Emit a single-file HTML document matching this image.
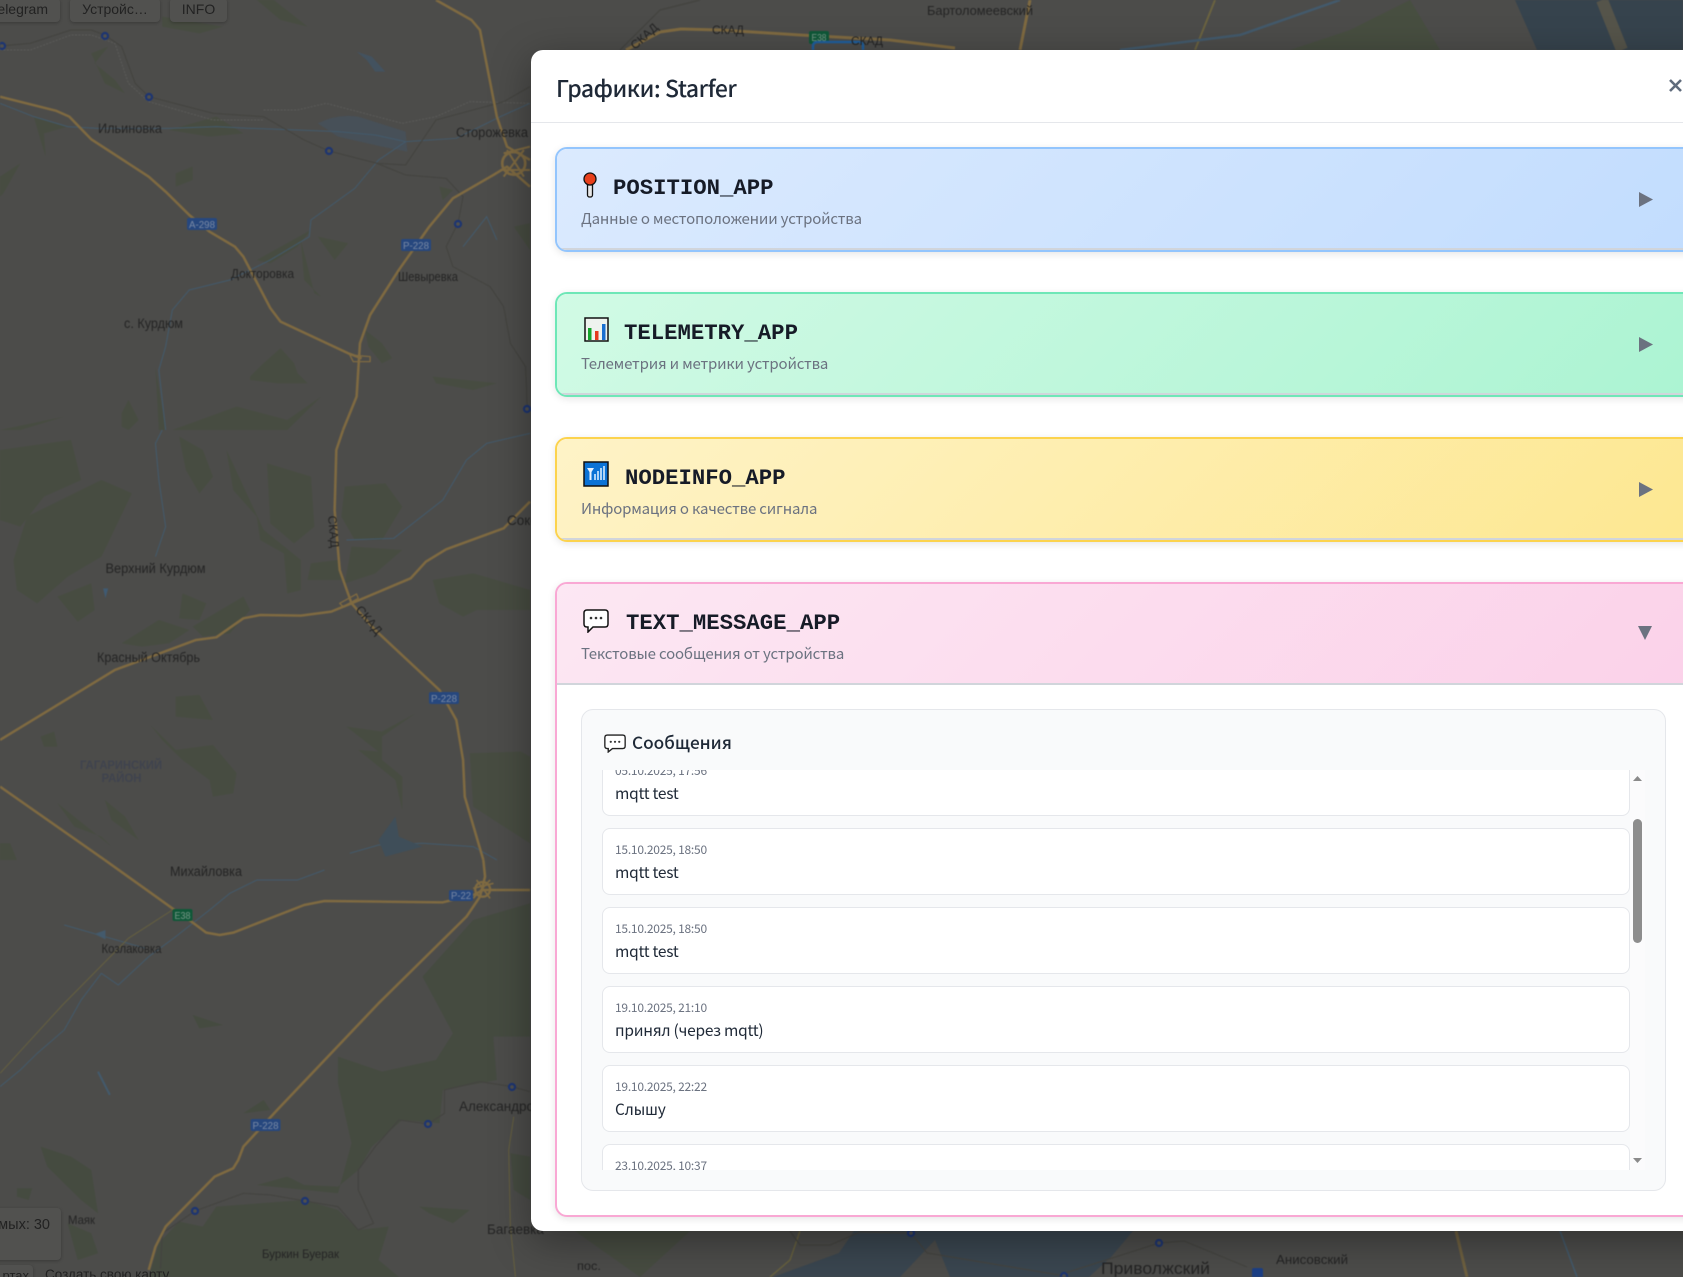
<!DOCTYPE html>
<html lang="ru"><head><meta charset="utf-8"><title>Графики: Starfer</title>
<style>
html,body{margin:0;padding:0;width:1683px;height:1277px;overflow:hidden;background:#4c4c4a}
body{position:relative;font-family:"Noto Sans CJK JP","Liberation Sans",sans-serif}
#map{position:absolute;left:0;top:0;filter:blur(.45px)}
#map text{font-family:"Liberation Sans","DejaVu Sans",sans-serif;fill:#242424;font-size:13.5px}
.mapbtn{position:absolute;background:#51514f;border-radius:4px;box-shadow:0 1px 3px rgba(0,0,0,.25);color:#222;font:14px/22px "Liberation Sans",sans-serif;text-align:center;box-sizing:border-box}
.modal{position:absolute;left:531px;top:50px;width:1300px;height:1181px;background:#fff;border-radius:12px;box-shadow:0 10px 40px rgba(0,0,0,.35);overflow:hidden}
.modal h2{position:absolute;left:25px;top:14.5px;margin:0;font-size:23px;letter-spacing:-.47px;line-height:44px;font-weight:500;color:#1f2937;white-space:nowrap}
.hline{position:absolute;left:0;top:72px;width:100%;height:1px;background:#e5e7eb}
.close{position:absolute;left:1137px;top:28px}
.card{position:absolute;left:24px;width:1300px;height:105px;box-sizing:border-box;border:2px solid;border-radius:12px;box-shadow:0 2px 8px rgba(0,0,0,.1);overflow:hidden;background:#fff}
.head{position:absolute;left:0;top:0;width:100%;height:101px;box-sizing:border-box;border-bottom:2px solid #d1d5db}
.blue{border-color:#93c5fd}.blue .head{background:linear-gradient(135deg,#dbeafe,#bfdbfe)}
.green{border-color:#6ee7b7}.green .head{background:linear-gradient(135deg,#d1fae5,#a7f3d0)}
.yellow{border-color:#fcd34d}.yellow .head{background:linear-gradient(135deg,#fef3c7,#fde68a)}
.pink{border-color:#f9a8d4}.pink .head{background:linear-gradient(135deg,#fce7f3,#fbcfe8)}
.ttl{position:absolute;top:26.5px;font:bold 22.3px/24px "Liberation Mono",monospace;color:#161b27;white-space:nowrap}
.sub{position:absolute;left:24px;top:60px;font-size:15px;letter-spacing:-.18px;line-height:20px;color:#6b7280;white-space:nowrap}
.ico{position:absolute}
.arr{position:absolute}
.panel{position:absolute;left:24px;top:125px;width:1085px;height:482px;box-sizing:border-box;background:#f9fafb;border:1px solid #e5e7eb;border-radius:12px}
.panel h3{position:absolute;left:50px;top:19px;margin:0;font-size:17.2px;line-height:26px;font-weight:500;color:#1f2937;white-space:nowrap}
.list{position:absolute;left:20px;top:60px;width:1043px;height:400px;overflow:hidden}
.msg{position:absolute;left:0;width:1028px;height:67px;box-sizing:border-box;background:#fff;border:1px solid #e5e7eb;border-radius:8px}
.msg b{position:absolute;left:12px;top:11.5px;font-size:12px;letter-spacing:-.24px;line-height:18px;font-weight:400;color:#6b7280;white-space:nowrap}
.msg span{position:absolute;left:12px;top:31.5px;font-size:15.5px;letter-spacing:-.25px;line-height:22px;color:#1f2937;white-space:nowrap}
.track{position:absolute;left:1028px;top:0;width:15px;height:400px;background:#fbfbfc}
.thumb{position:absolute;left:3px;top:49px;width:9px;height:124px;border-radius:5px;background:#8d8d8d}
</style></head><body>
<svg id="map" width="1683" height="1277" viewBox="0 0 1683 1277">
<rect width="1683" height="1277" fill="#4c4c4a"/>
<!-- upper map region -->
<g transform="scale(.338,.3333)">
<g fill="#474c41">
<path d="M0,530L60,490L10,580L0,590Z"/><path d="M760,780L920,690L880,740L800,790Z"/><path d="M890,720L930,880L950,890L900,840Z"/><path d="M940,710L1030,730L990,780Z"/><path d="M1300,560L1340,570L1310,600Z"/><path d="M1520,680L1568,670L1568,750Z"/><path d="M740,1130L780,1090L830,1045L870,1090L880,1120L910,1150L820,1150L740,1140Z"/><path d="M360,1240L380,1200L410,1260L380,1290L360,1280Z"/><path d="M0,1290L190,1250L60,1290Z"/><path d="M460,1100L490,1290L470,1290Z"/><path d="M510,1290L700,1220L850,1260L950,1190L850,1290Z"/><path d="M1080,990L1130,1030L1160,1075L1130,1090L1090,1040Z"/><path d="M500,390L640,350L720,400L620,410Z"/><path d="M100,350L200,380L130,400L135,470L120,420Z"/><path d="M270,160L320,140L280,190L340,240L370,280L310,250Z"/><path d="M760,0L810,0L910,80L830,60Z"/><path d="M480,50L660,80L590,100L480,80Z"/><path d="M520,520L570,500L570,540L520,560Z"/><path d="M1280,1130L1470,1150L1400,1170L1290,1150Z"/>
</g>
<path d="M940,370Q1000,340 1060,350L1200,395L1205,455L1130,440L1000,410Z" fill="#475058"/>
<path d="M1055,155L1100,170L1140,215L1110,215L1085,180Z" fill="#43525f"/>
<g fill="none" stroke="#435a6c" stroke-width="3">
<path d="M0,310L100,350L200,380L290,385L500,385L640,380L740,385L880,390L1000,395L1110,405L1200,425L1350,415L1480,350L1568,310"/>
<path d="M1200,425L1120,480L1050,565L920,660L915,710L800,780L680,840L560,870L510,930L490,1040L470,1110L490,1290"/>
<path d="M1370,740L1440,650L1470,720"/>
</g>
<g fill="none" stroke="#5b5b59" stroke-width="3" stroke-dasharray="6 4">
<path d="M0,150L90,150L210,105L270,105L340,130L380,250L440,305L630,360L780,360"/>
<path d="M780,330L880,330L965,310L1190,370L1290,350L1390,305L1568,310"/>
</g>
<g fill="none" stroke="#444440" stroke-width="3.5">
<path d="M0,138L90,130L210,90L270,90L310,105L360,140L400,250L440,290L630,340L780,350L900,420L973,453L1115,490L1200,525L1320,535L1370,590L1355,670L1320,740L1340,800L1450,860L1490,920L1510,1030L1555,1100L1560,1225"/>
<path d="M1115,490L1200,495L1250,420L1290,360L1490,305L1568,260"/>
</g>
<g fill="none" stroke="#7f6a41" stroke-width="7.5" stroke-linejoin="round">
<path d="M0,290L165,332L205,350L270,418L440,530L490,575L560,645L620,695L695,740L720,770L800,925L830,965L1030,1060L1070,1075"/>
<path d="M1015,1290L1055,1190L1065,1030L1095,945L1180,810L1270,680L1340,595L1460,525L1500,500L1568,560"/>
<path d="M1290,0L1395,60L1420,90L1470,350L1500,440L1568,480"/>
<path d="M1035,1065L1095,1070L1095,1085L1045,1085Z" stroke-width="4"/>
<path d="M1490,460L1568,440M1480,510L1568,510M1500,450L1550,530M1550,450L1490,530" stroke-width="6"/>
<circle cx="1520" cy="490" r="34" stroke-width="8"/>
</g>
</g>
<!-- middle map region -->
<g transform="translate(0,430) scale(.338,.3333)">
<g fill="#474c41">
<path d="M0,60L210,30L240,150L130,200L60,290L0,270Z"/><path d="M80,260L300,150L390,190L300,380L200,440L110,520L50,480L40,390Z"/><path d="M170,500L270,460L280,540L230,575Z"/><path d="M540,490L610,520L590,570L530,565Z"/><path d="M790,100L920,140L930,290L870,340L800,280Z"/><path d="M530,20L600,60L630,140L590,190L550,120Z"/><path d="M920,400L1000,390L1010,450L910,450Z"/><path d="M1020,170L1140,160L1190,230L1130,330L1050,330L1010,260Z"/><path d="M1040,350L1190,360L1110,430L1020,460Z"/><path d="M520,800L590,795L630,870L520,860Z"/><path d="M445,885L520,960L630,945L700,1030L690,1090L630,1100L620,1050L540,990L480,930Z"/><path d="M1025,890L1130,905L1230,850L1130,920L1130,990L1190,1040L1190,1140L1170,1050L1060,960L1120,965Z"/><path d="M1390,970L1540,965L1568,980L1568,1240L1400,1130Z"/><path d="M1280,450L1400,430L1568,480L1568,540L1410,540L1370,560L1300,520Z"/><path d="M170,1120L330,1250L300,1220L220,1190Z"/><path d="M310,1110L370,1160L410,1230L330,1170Z"/><path d="M0,1240L30,1240L50,1290L0,1290Z"/><path d="M670,60L780,300L890,390L890,480L850,490L840,370L770,330L760,260L690,180Z"/><path d="M570,590L720,500L740,540L680,610L600,620Z"/><path d="M360,640L470,570L560,600L500,640L420,650Z"/><path d="M120,920L160,905L170,950L130,950Z"/>
</g>
<g fill="none" stroke="#435a6c" stroke-width="3">
<path d="M480,0L460,40L470,150L490,290L460,380"/>
<path d="M1025,330L1165,325L1310,210L1380,90L1440,40L1568,10"/>
<path d="M1035,1270L1120,1245L1250,1240L1400,1250L1470,1290"/>
</g>
<path d="M1120,1230L1170,1160L1180,1220L1250,1250L1140,1280Z" fill="#3f4e59"/>
<path d="M305,475L320,475L312,505Z" fill="#3f5a72"/>
<g fill="none" stroke="#7f6a41" stroke-width="7.5" stroke-linejoin="round">
<path d="M1015,0L995,60L990,240L1005,420L1040,520L1110,600L1300,780L1350,870L1370,990L1375,1100L1430,1290"/>
<path d="M0,930L340,720L580,630L640,622L720,565L770,555L890,557L980,545L1040,520L1215,445L1260,395L1320,358L1490,295L1568,215"/>
<path d="M0,1070L310,1290"/>
<path d="M1005,520L1055,492L1060,505L1015,530Z" stroke-width="4"/>
</g>
</g>
<!-- lower map region -->
<g transform="translate(0,860) scale(.338,.3333)">
<g fill="#454b40">
<path d="M1250,350L1400,180L1568,130L1568,530L1460,540L1470,660L1310,690L1300,790L1190,780L1100,860L1060,930L1000,980L900,975L850,950L760,975L1000,1000L1040,850L1000,670L1000,590L1130,635L1290,600L1340,520Z"/>
<path d="M640,1040L900,1020L1000,1050L1060,1110L1150,1100L1120,1200L1180,1251L440,1251L470,1150L530,1085L600,1100Z"/>
<path d="M120,860L210,890L270,930L290,1060L240,1020L140,920Z"/><path d="M50,985L95,985L85,1020L50,1010Z"/><path d="M720,760L780,720L800,750Z"/><path d="M570,465L660,495L590,505Z"/><path d="M1240,1040L1390,1050L1340,1090L1270,1060Z"/><path d="M1510,880L1568,890L1568,1020L1520,990Z"/><path d="M200,1090L270,1120L290,1180L230,1200Z"/>
</g>
<path d="M1460,530L1568,530L1568,650L1470,650Z" fill="#4c4c4a"/>
<g fill="none" stroke="#435a6c" stroke-width="3">
<path d="M0,680L60,630L110,580L190,510L240,420L300,340L350,375L440,290L520,230L620,150L680,100L760,60L880,60L960,30"/>
<path d="M190,195L430,265"/><path d="M290,635L325,705" stroke-width="6"/>
</g>
<path d="M280,222L312,210L312,238Z" fill="#435a6c"/>
<g fill="none" stroke="#66603f" stroke-width="3">
<path d="M510,150L380,235L185,435L0,640"/><path d="M1520,770L1505,870L1510,1100L1525,1251"/>
</g>
<g fill="none" stroke="#444440" stroke-width="3.5">
<path d="M475,1225L480,1120L577,1053L720,1000L800,1005L902,1023L1000,1040L1060,1110L1105,1090L1060,990L1060,930L1110,860L1180,780L1266,792L1315,760L1315,690L1420,665L1515,680L1568,695"/>
</g>
<g fill="none" stroke="#7f6a41" stroke-width="7.5" stroke-linejoin="round">
<path d="M310,0L510,145L560,180L610,218L650,225L690,218L900,135L960,123L1310,127L1400,105L1430,90L1568,90"/>
<path d="M1430,0L1435,50L1420,110L1380,170L1120,430L820,750L720,860L705,900L690,925L635,950L490,1100L460,1160L440,1230"/>
<path d="M1400,85L1460,70M1400,115L1450,60M1410,60L1450,115" stroke-width="5"/>
<circle cx="1428" cy="88" r="22" stroke-width="7"/>
</g>
</g>
<!-- stations -->
<g fill="#50504d" stroke="#1c3472" stroke-width="2.2">
<circle cx="2" cy="46" r="3"/><circle cx="105" cy="36" r="3"/><circle cx="149" cy="97" r="3"/><circle cx="329" cy="151" r="3"/><circle cx="458" cy="224" r="3"/><circle cx="527" cy="409" r="3"/><circle cx="195" cy="1211" r="3"/><circle cx="305" cy="1201" r="3"/><circle cx="428" cy="1124" r="3"/><circle cx="512" cy="1087" r="3"/>
</g>
<!-- top strip -->
<path d="M1515,0L1683,0L1683,50L1537,50Z" fill="#36434d"/>
<path d="M1602,0L1622,50" stroke="#55544a" stroke-width="12"/>
<path d="M1030,0L1020,50" stroke="#7f6a41" stroke-width="3"/>
<path d="M1215,0L1195,50" stroke="#6b6340" stroke-width="2"/>
<path d="M1120,50L1240,35L1340,0" stroke="#435a6c" stroke-width="2.5" fill="none"/>
<path d="M1290,50L1350,30L1410,0L1440,50" fill="#474e40"/>
<path d="M626,50L660,32L681,29L720,30L800,35L890,40L955,48" stroke="#7f6a41" stroke-width="3" fill="none"/>
<path d="M620,50L660,10L700,0" stroke="#444440" stroke-width="1.5" fill="none"/>
<rect x="809" y="31" width="20" height="13" rx="2" fill="#0f5838"/>
<path d="M813,50V46Q813,42 818,42H858Q863,42 863,46V50" fill="#4c4c4a" stroke="#1f5e9c" stroke-width="2.5"/>
<!-- bottom strip -->
<path d="M854,1231L1133,1231L1111,1257L1089,1277L773,1277L839,1253Z" fill="#3a4650"/>
<path d="M900,1277L935,1240L950,1277M1000,1240L1060,1277" fill="#4c4c4a"/>
<path d="M575,1231L640,1277L690,1231" fill="#474c41"/>
<path d="M1456,1231L1467,1277" stroke="#6e6040" stroke-width="3"/>
<path d="M1560,1231L1577,1277" stroke="#435a6c" stroke-width="1.5"/>
<path d="M800,1231L790,1260L770,1277" stroke="#66603f" stroke-width="1.5" fill="none"/>
<g fill="none" stroke="#444440" stroke-width="1.2"><path d="M790,1231L800,1245L830,1245L860,1232L911,1233L927,1253L1059,1275L1159,1243L1184,1241L1247,1267"/></g>
<g fill="#50504d" stroke="#1c3472" stroke-width="2.2"><circle cx="911" cy="1233" r="3"/><circle cx="1159" cy="1243" r="3"/><circle cx="1064" cy="1276" r="3"/></g>
<rect x="1252" y="1268" width="11" height="10" rx="2" fill="#1c3f86"/>
<!-- shields -->
<g>
<rect x="187" y="218" width="30" height="12" rx="2" fill="#26477e"/><rect x="401" y="239" width="30" height="12" rx="2" fill="#26477e"/><rect x="429" y="692" width="30" height="12" rx="2" fill="#26477e"/><rect x="449" y="890" width="24" height="11" rx="2" fill="#26477e"/><rect x="172.500" y="909" width="20" height="12" rx="2" fill="#0f5838"/><rect x="250.500" y="1119" width="30" height="12" rx="2" fill="#26477e"/>
</g>
<text x="189" y="228" textLength="26" lengthAdjust="spacingAndGlyphs" style="font-size:10px;fill:#7a8aa5">А-298</text>
<text x="403" y="249" textLength="26" lengthAdjust="spacingAndGlyphs" style="font-size:10px;fill:#7a8aa5">Р-228</text>
<text x="431" y="702" textLength="26" lengthAdjust="spacingAndGlyphs" style="font-size:10px;fill:#7a8aa5">Р-228</text>
<text x="451" y="899" textLength="20" lengthAdjust="spacingAndGlyphs" style="font-size:10px;fill:#7a8aa5">Р-22</text>
<text x="174.500" y="919" textLength="16" lengthAdjust="spacingAndGlyphs" style="font-size:10px;fill:#7a9a8a">E38</text>
<text x="252.500" y="1129" textLength="26" lengthAdjust="spacingAndGlyphs" style="font-size:10px;fill:#7a8aa5">Р-228</text>
<text x="811.500" y="41" textLength="15" lengthAdjust="spacingAndGlyphs" style="font-size:10px;fill:#7a9a8a">E38</text>
<!-- labels -->
<text x="98" y="133" textLength="64" lengthAdjust="spacingAndGlyphs">Ильиновка</text>
<text x="456" y="137" textLength="72" lengthAdjust="spacingAndGlyphs">Сторожевка</text>
<text x="231" y="278" textLength="63" lengthAdjust="spacingAndGlyphs" style="font-size:12.5px">Докторовка</text>
<text x="398" y="281" textLength="60" lengthAdjust="spacingAndGlyphs" style="font-size:12.5px">Шевыревка</text>
<text x="124" y="328" textLength="59" lengthAdjust="spacingAndGlyphs">с. Курдюм</text>
<text x="105.500" y="573" textLength="100" lengthAdjust="spacingAndGlyphs">Верхний Курдюм</text>
<text x="97" y="662" textLength="103" lengthAdjust="spacingAndGlyphs">Красный Октябрь</text>
<text x="80" y="769" textLength="82" lengthAdjust="spacingAndGlyphs" style="font-size:11.5px;font-weight:bold;fill:#3f434e">ГАГАРИНСКИЙ</text>
<text x="101.500" y="782" textLength="40" lengthAdjust="spacingAndGlyphs" style="font-size:11.5px;font-weight:bold;fill:#3f434e">РАЙОН</text>
<text x="507" y="525">Сокол</text>
<text x="170" y="876" textLength="72" lengthAdjust="spacingAndGlyphs">Михайловка</text>
<text x="101.500" y="953" textLength="60" lengthAdjust="spacingAndGlyphs" style="font-size:12.5px">Козлаковка</text>
<text x="68" y="1224" textLength="27" lengthAdjust="spacingAndGlyphs" style="font-size:12px">Маяк</text>
<text x="262" y="1258" textLength="77" lengthAdjust="spacingAndGlyphs" style="font-size:12px">Буркин Буерак</text>
<text x="459" y="1111">Александровка</text>
<text x="487" y="1234">Багаевка</text>
<text transform="translate(328,516) rotate(85)" style="font-size:12px">СКАД</text>
<text transform="translate(355,610) rotate(50)" style="font-size:12.5px">СКАД</text>
<text x="927" y="15" textLength="106" lengthAdjust="spacingAndGlyphs" style="font-size:13px">Бартоломеевский</text>
<text transform="translate(635,50) rotate(-42)" style="font-size:12px">СКАД</text>
<text x="712" y="34" textLength="32" lengthAdjust="spacingAndGlyphs" style="font-size:12px">СКАД</text>
<text x="851" y="45" textLength="32" lengthAdjust="spacingAndGlyphs" style="font-size:12px">СКАД</text>
<text x="577" y="1270" textLength="24" lengthAdjust="spacingAndGlyphs" style="font-size:12px">пос.</text>
<text x="1101" y="1274" textLength="109" lengthAdjust="spacingAndGlyphs" style="font-size:17px">Приволжский</text>
<text x="1276" y="1264" textLength="72" lengthAdjust="spacingAndGlyphs" style="font-size:13px">Анисовский</text>
</svg>
<div class="mapbtn" style="left:-10px;top:-2px;width:70px;height:24px;text-align:right;padding-right:12px">Telegram</div>
<div class="mapbtn" style="left:70px;top:-2px;width:90px;height:24px">Устройс…</div>
<div class="mapbtn" style="left:170px;top:-2px;width:57px;height:24px">INFO</div>
<div class="mapbtn" style="left:-10px;top:1208px;width:71px;height:52px;text-align:right;padding:6px 11px 0 0;font-size:14.5px;white-space:nowrap;overflow:hidden">мых: 30</div>
<div class="mapbtn" style="left:-10px;top:1265px;width:43px;height:16px;text-align:right;padding-right:4px;font-size:13px">ртах</div>
<div style="position:absolute;left:45px;top:1268px;color:#222;font:13.5px/14px 'Liberation Sans',sans-serif;white-space:nowrap">Создать свою карту</div>

<div class="modal">
<h2>Графики: Starfer</h2>
<svg class="close" width="16" height="16" viewBox="0 0 16 16"><path d="M2,2L13,13M13,2L2,13" stroke="#5f6b7c" stroke-width="2.6" fill="none"/></svg>
<div class="hline"></div>

<div class="card blue" style="top:97px">
<div class="head">
<svg class="ico" style="left:25px;top:23px" width="16" height="26" viewBox="0 0 16 26"><rect x="5.5" y="10" width="5" height="15" rx="2" fill="#e8e8e8" stroke="#111" stroke-width="1.3"/><circle cx="8" cy="7" r="6" fill="#e8401c" stroke="#111" stroke-width="1.3"/></svg>
<div class="ttl" style="left:56px">POSITION_APP</div>
<div class="sub">Данные о местоположении устройства</div>
<svg class="arr" style="left:1082px;top:43px" width="14" height="16"><path d="M0,0L14,7.5L0,15Z" fill="#6b7280"/></svg>
</div></div>

<div class="card green" style="top:242px">
<div class="head">
<svg class="ico" style="left:27px;top:23px" width="25" height="25" viewBox="0 0 25 25"><rect x="1" y="1" width="23" height="23" fill="#eef3ee" stroke="#111" stroke-width="1.5"/><rect x="4" y="11" width="3.5" height="12" fill="#15a52c"/><rect x="11" y="14" width="3.5" height="9" fill="#e53a1e"/><rect x="18" y="7" width="3.5" height="16" fill="#1a6fd0"/></svg>
<div class="ttl" style="left:67px">TELEMETRY_APP</div>
<div class="sub">Телеметрия и метрики устройства</div>
<svg class="arr" style="left:1082px;top:43px" width="14" height="16"><path d="M0,0L14,7.5L0,15Z" fill="#6b7280"/></svg>
</div></div>

<div class="card yellow" style="top:387px">
<div class="head">
<svg class="ico" style="left:26px;top:22px" width="26" height="26" viewBox="0 0 26 26"><rect x="1" y="1" width="24" height="24" fill="#0b73d6" stroke="#111" stroke-width="1.5"/><path d="M4,7H11L8.5,11V19H6.5V11Z" fill="#e8f3ff"/><path d="M12,13V19M15,10V19M18,7V19M21,5V19" stroke="#d8ecff" stroke-width="1.6"/></svg>
<div class="ttl" style="left:68px">NODEINFO_APP</div>
<div class="sub">Информация о качестве сигнала</div>
<svg class="arr" style="left:1082px;top:43px" width="14" height="16"><path d="M0,0L14,7.5L0,15Z" fill="#6b7280"/></svg>
</div></div>

<div class="card pink" style="top:532px;height:635px">
<div class="head">
<svg class="ico" style="left:26px;top:25px" width="26" height="24" viewBox="0 0 26 24"><path d="M4,1H22Q25,1 25,4V15Q25,18 22,18H10L5,23V18H4Q1,18 1,15V4Q1,1 4,1Z" fill="#fff" stroke="#111" stroke-width="1.5"/><circle cx="8" cy="9" r="1.3" fill="#333"/><circle cx="13" cy="9" r="1.3" fill="#333"/><circle cx="18" cy="9" r="1.3" fill="#333"/></svg>
<div class="ttl" style="left:69px">TEXT_MESSAGE_APP</div>
<div class="sub">Текстовые сообщения от устройства</div>
<svg class="arr" style="left:1081px;top:42px" width="15" height="15"><path d="M0,0L14,0L7,14Z" fill="#6b7280"/></svg>
</div>
<div class="panel">
<svg class="ico" style="left:22px;top:24px" width="22" height="19" viewBox="0 0 26 22"><path d="M4,1H22Q25,1 25,4V14Q25,17 22,17H10L5,21V17H4Q1,17 1,14V4Q1,1 4,1Z" fill="#fff" stroke="#222" stroke-width="1.6"/><circle cx="8" cy="9" r="1.3" fill="#333"/><circle cx="13" cy="9" r="1.3" fill="#333"/><circle cx="18" cy="9" r="1.3" fill="#333"/></svg>
<h3>Сообщения</h3>
<div class="list">
<div class="msg" style="top:-21px"><b>05.10.2025, 17:56</b><span>mqtt test</span></div>
<div class="msg" style="top:58px"><b>15.10.2025, 18:50</b><span>mqtt test</span></div>
<div class="msg" style="top:137px"><b>15.10.2025, 18:50</b><span>mqtt test</span></div>
<div class="msg" style="top:216px"><b>19.10.2025, 21:10</b><span>принял (через mqtt)</span></div>
<div class="msg" style="top:295px"><b>19.10.2025, 22:22</b><span>Слышу</span></div>
<div class="msg" style="top:374px"><b>23.10.2025, 10:37</b><span>Слышу</span></div>
<div class="track"><div class="thumb"></div>
<svg style="position:absolute;left:3px;top:6px" width="9" height="5"><path d="M4.5,0L9,5H0Z" fill="#8a8a8a"/></svg>
<svg style="position:absolute;left:3px;top:388px" width="9" height="5"><path d="M0,0H9L4.5,5Z" fill="#8a8a8a"/></svg>
</div>
</div>
</div>
</div>
</div>
</body></html>
